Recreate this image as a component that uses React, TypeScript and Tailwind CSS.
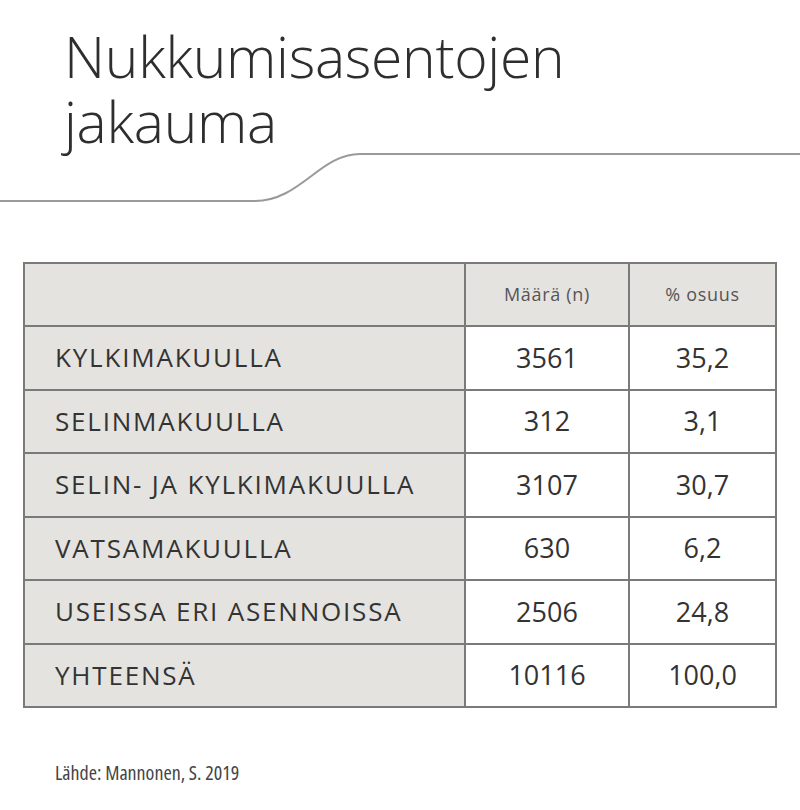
const rows = [
  { label: "KYLKIMAKUULLA", n: "3561", pct: "35,2" },
  { label: "SELINMAKUULLA", n: "312", pct: "3,1" },
  { label: "SELIN- JA KYLKIMAKUULLA", n: "3107", pct: "30,7" },
  { label: "VATSAMAKUULLA", n: "630", pct: "6,2" },
  { label: "USEISSA ERI ASENNOISSA", n: "2506", pct: "24,8" },
  { label: "YHTEENSÄ", n: "10116", pct: "100,0" },
];

export default function App() {
  return (
    <div className="w-[800px] h-[810px] bg-white overflow-hidden font-['Open_Sans',sans-serif] text-[#333]">
      {/* Title */}
      <div className="pt-[24px] pl-[64px]">
        <h1 className="text-[57px] leading-[65px] font-light tracking-[-0.3px] text-[#2e2e2e]">
          Nukkumisasentojen
          <br />
          jakauma
        </h1>
      </div>

      {/* Wave divider */}
      <svg width="800" height="60" viewBox="0 0 800 60" className="block -mt-[2px]">
        <path
          d="M0 49 L255 49 C300 49 320 2 360 2 L800 2"
          fill="none"
          stroke="#9a9a9a"
          strokeWidth="2"
        />
      </svg>

      {/* Table */}
      <div className="pl-[23px] pt-[50px]">
        <table className="border-collapse">
          <thead>
            <tr className="h-[63px] bg-[#e5e3e0]">
              <th className="w-[441px] border-2 border-[#7a7a7a]" />
              <th className="w-[164px] border-2 border-[#7a7a7a] text-[18px] tracking-[0.7px] font-normal text-[#555]">
                Määrä (n)
              </th>
              <th className="w-[147px] border-2 border-[#7a7a7a] text-[18px] tracking-[0.7px] font-normal text-[#555]">
                % osuus
              </th>
            </tr>
          </thead>
          <tbody>
            {rows.map((r) => (
              <tr key={r.label} className="h-[63.5px]">
                <td className="bg-[#e5e3e0] border-2 border-[#7a7a7a] pl-[30px] text-[26px] tracking-[1.8px] text-[#333]">
                  {r.label}
                </td>
                <td className="bg-white border-2 border-[#7a7a7a] text-center text-[27px] text-[#333]">
                  {r.n}
                </td>
                <td className="bg-white border-2 border-[#7a7a7a] text-center text-[27px] text-[#333]">
                  {r.pct}
                </td>
              </tr>
            ))}
          </tbody>
        </table>
      </div>

      {/* Source */}
      <p className="pl-[55px] pt-[50px] text-[20px] [font-stretch:condensed] text-[#444]">
        Lähde: Mannonen, S. 2019
      </p>
    </div>
  );
}
